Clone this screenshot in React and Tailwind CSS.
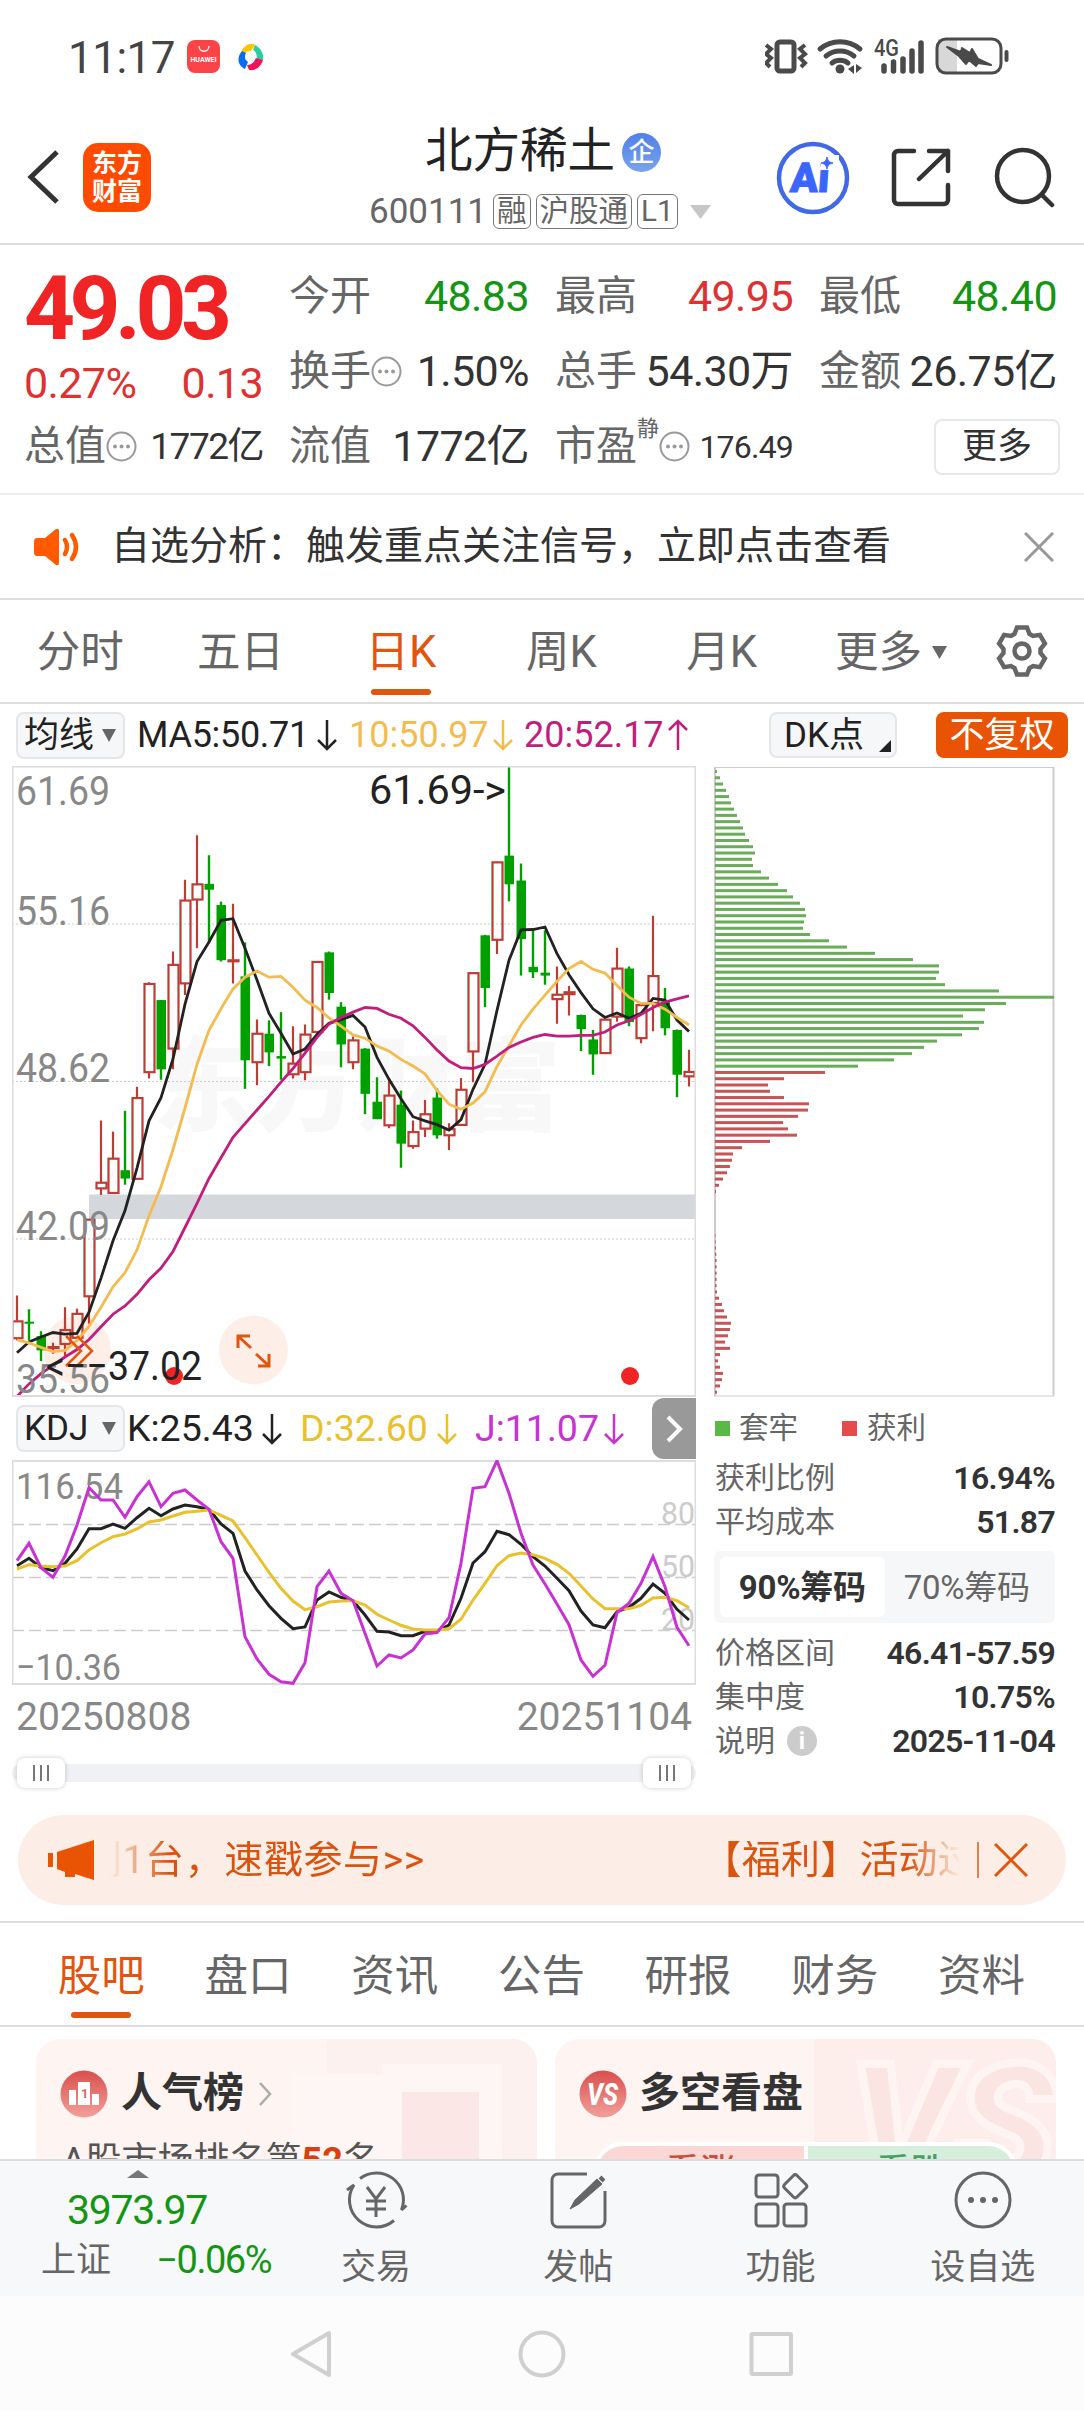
import React, { useState } from "react";

// [direction, high, body top, body bottom, low], counted down from the top of the pane
const candles = [
  ["r", 1292, 1353, 1396, 1400], ["g", 1325, 1355, 1359, 1400], ["g", 1378, 1390, 1424, 1450],
  ["r", 1406, 1415, 1420, 1432], ["r", 1320, 1374, 1410, 1440], ["r", 1324, 1335, 1395, 1400],
  ["r", 1108, 1108, 1295, 1360], ["r", 870, 1019, 1035, 1050], ["r", 897, 961, 1046, 1046],
  ["g", 847, 990, 1010, 1025], ["r", 789, 815, 1012, 1012], ["r", 537, 540, 755, 769],
  ["g", 580, 580, 747, 772], ["r", 463, 494, 698, 747], ["r", 290, 339, 541, 568],
  ["r", 183, 300, 339, 455], ["g", 231, 300, 314, 440], ["g", 343, 351, 484, 487],
  ["r", 348, 483, 484, 540], ["g", 441, 523, 725, 794], ["r", 627, 660, 731, 785],
  ["g", 629, 661, 706, 739], ["g", 609, 715, 721, 772], ["r", 643, 732, 760, 769],
  ["r", 639, 662, 755, 773], ["r", 487, 487, 658, 672], ["g", 463, 465, 563, 579],
  ["g", 585, 596, 687, 742], ["r", 668, 676, 731, 747], ["g", 696, 697, 806, 855],
  ["g", 766, 825, 867, 867], ["r", 770, 809, 883, 889], ["g", 798, 832, 926, 984],
  ["r", 870, 897, 933, 938], ["r", 821, 854, 891, 910], ["g", 793, 815, 906, 914],
  ["r", 877, 890, 907, 941], ["r", 768, 795, 882, 882], ["r", 513, 514, 705, 778],
  ["g", 423, 424, 551, 597], ["r", 246, 247, 436, 469], ["g", 16, 232, 301, 342],
  ["g", 251, 292, 433, 521], ["g", 410, 500, 513, 527], ["g", 412, 514, 521, 543],
  ["r", 499, 566, 579, 637], ["r", 546, 560, 567, 617], ["g", 615, 616, 650, 703],
  ["g", 652, 675, 711, 760], ["r", 625, 626, 709, 709], ["r", 454, 503, 621, 632],
  ["g", 499, 504, 633, 643], ["r", 590, 591, 673, 684], ["r", 377, 521, 588, 655],
  ["g", 551, 583, 648, 665], ["g", 651, 652, 760, 814], ["r", 700, 752, 765, 788],
];

const ma5 = [
  1430, 1404, 1392, 1381, 1385, 1383, 1332, 1250, 1160, 1087, 985, 871, 815, 722, 590, 487, 440, 388, 384,
  455, 532, 612, 660, 710, 698, 663, 636, 627, 617, 645, 718, 771, 818, 861, 871, 880, 893, 868, 795, 735,
  605, 484, 411, 410, 404, 468, 519, 562, 601, 622, 611, 624, 612, 576, 580, 628, 656,
];
const ma10 = [
  1399, 1406, 1417, 1427, 1424, 1400, 1366, 1320, 1271, 1237, 1182, 1100, 1030, 940, 840, 735, 653, 601, 553,
  525, 510, 525, 523, 549, 580, 598, 623, 643, 664, 672, 691, 703, 723, 739, 758, 798, 831, 843, 828, 801,
  740, 690, 640, 602, 568, 535, 504, 487, 506, 515, 545, 573, 588, 588, 602, 622, 640,
];
const ma20 = [
  1535, 1505, 1480, 1460, 1440, 1422, 1398, 1367, 1337, 1317, 1289, 1254, 1226, 1186, 1128, 1070, 1010, 960, 911,
  878, 845, 812, 778, 745, 708, 670, 638, 622, 609, 598, 600, 614, 624, 642, 670, 700, 727, 743, 745, 735,
  715, 694, 681, 670, 663, 667, 667, 665, 665, 657, 640, 630, 615, 598, 585, 577, 570,
];

const kLine = [
  527, 505, 533, 542, 520, 477, 416, 416, 402, 415, 383, 355, 377, 357, 345, 350, 358, 402, 430, 543, 600, 647,
  685, 716, 711, 630, 606, 622, 632, 675, 724, 726, 737, 737, 724, 724, 705, 625, 519, 485, 424, 434, 463, 500,
  528, 565, 602, 663, 705, 713, 665, 652, 625, 582, 610, 658, 690,
];
const dLine = [
  537, 524, 528, 530, 528, 512, 480, 458, 440, 432, 417, 396, 390, 378, 367, 364, 360, 376, 393, 443, 495, 547,
  595, 633, 659, 650, 636, 633, 632, 645, 673, 690, 706, 717, 720, 720, 716, 688, 630, 580, 527, 497, 489, 494,
  505, 523, 550, 588, 627, 656, 656, 656, 646, 624, 622, 632, 653,
];
const jLine = [
  512, 460, 533, 562, 498, 405, 293, 330, 330, 382, 320, 275, 350, 310, 300, 330, 358, 455, 505, 740, 807, 853,
  875, 880, 818, 590, 543, 610, 632, 730, 828, 795, 804, 780, 732, 728, 683, 520, 295, 290, 212, 310, 430, 525,
  582, 642, 704, 810, 859, 826, 668, 640, 580, 500, 590, 712, 767,
];

// chip distribution, one bar per price level, top to bottom
const chips = [
  2, 5, 8, 11, 14, 16, 19, 22, 25, 28, 30, 34, 38, 40, 37, 38, 46, 54, 63, 72, 78, 85, 90, 91, 89, 88, 95, 114,
  132, 160, 198, 224, 224, 221, 230, 284, 339, 291, 270, 248, 269, 264, 247, 222, 209, 197, 179, 143, 110, 69,
  53, 55, 69, 94, 93, 83, 68, 73, 82, 55, 27, 18, 17, 15, 12, 8, 4, 1, 0, 0, 0, 0, 0, 0, 0.5, 0.7, 1, 1.3, 1.6,
  1.6, 1.6, 1.6, 1.6, 2, 4, 7, 9, 12, 16, 15, 13, 10, 15, 5, 3, 5, 8, 7, 5, 2,
];

const candleX = (i) => 5 + i * 12;
const candleY = (v) => (v - 16) * 0.415;
const kdjY = (v) => v / 3 - 70;
const toPoints = (data, y) =>
  data.map((v, i) => `${candleX(i)},${y(v).toFixed(1)}`).join(" ");

const gearPoints = Array.from({ length: 6 })
  .flatMap((_, i) => {
    const a = (i * Math.PI) / 3;
    return [[-7.5, -17], [-5, -23.5], [5, -23.5], [7.5, -17]].map(
      ([x, y]) =>
        `${(27 + x * Math.cos(a) - y * Math.sin(a)).toFixed(1)},${(27 + x * Math.sin(a) + y * Math.cos(a)).toFixed(1)}`
    );
  })
  .join(" ");

const StatusBar = () => (
  <div className="flex h-[115px] items-start pl-[68px] pr-[74px] pt-[36px] text-[#444]">
    <span className="w-[119px] whitespace-nowrap text-[44px] leading-[44px] tracking-[-0.5px]">11:17</span>
    <div className="mt-[4px] flex h-[33px] w-[33px] flex-col items-center rounded-lg bg-[#fb4348] pt-[5px] text-white">
      <svg width="12" height="8" viewBox="0 0 12 8" fill="none" stroke="#fff" strokeWidth="1.3">
        <path d="M1 1c0 7 10 7 10 0" />
      </svg>
      <span className="mt-[3px] text-[7px] font-bold leading-[8px]">HUAWEI</span>
    </div>
    <svg className="ml-[18px] mt-[7px]" width="26" height="28" viewBox="0 0 26 28">
      <path d="M4 7C9 0 15 0 17 2l-4 6C10 8 6 10 4 11z" fill="#ffc400" />
      <path d="M17 2c7 4 9 10 8 15l-6-1c0-4-1-8-4-9z" fill="#28cda0" />
      <path d="M25 17c-2 7-8 11-14 10l-2-5c5 0 7-3 9-7z" fill="#f0145a" />
      <path d="M4 8c-6 7-4 15 3 18l3-7c-3-2-4-5-2-9z" fill="#0a6cf0" />
    </svg>
    <div className="flex-1" />
    <svg width="245" height="42" viewBox="0 0 245 42" fill="none" stroke="#4a4a4a">
      <rect x="12" y="6" width="17" height="29" rx="3" strokeWidth="5" />
      <path d="m1 9 5 4-5 5 5 4-5 5 4 4M40 9l-5 4 5 5-5 4 5 5-4 4" strokeWidth="4" />
      <path d="M55 13a31 31 0 0 1 40 0M61 20a22 22 0 0 1 28 0M67 27a13 13 0 0 1 16 0" strokeWidth="5" strokeLinecap="round" />
      <circle cx="75" cy="33" r="4.500" fill="#4a4a4a" stroke="none" />
      <path d="M83 33l6-4v9zM97 32l-6-4v9z" fill="#4a4a4a" stroke="none" />
      <text x="109" y="20" fontSize="23" fontWeight="500" textLength="25" lengthAdjust="spacingAndGlyphs" fill="#4a4a4a" stroke="none">4G</text>
      <path d="M119 35v-5M128.500 35v-9M138 35V23M147 35V15M156 35V7" strokeWidth="5.500" strokeLinecap="round" />
      <rect x="173" y="3" width="19" height="34" fill="#d8d8d8" stroke="none" />
      <rect x="172" y="3" width="64" height="34" rx="9" strokeWidth="3" />
      <path d="M182 11l14 5 1-4 8 5 2-4 6 10 13 6-13-2-2 3-7-6-3 4-7-8z" fill="#4a4a4a" strokeWidth="2" strokeLinejoin="round" />
      <path d="M241.500 16v8" strokeWidth="4" strokeLinecap="round" />
    </svg>
  </div>
);

const Tag = ({ children }) => (
  <span className="flex h-[35px] items-center whitespace-nowrap rounded-[6px] border-[1.500px] border-[#777] px-[3px] text-[29.500px] leading-none">
    {children}
  </span>
);

const Header = () => (
  <div className="flex h-[130px] items-start border-b-2 border-[#ddd] pl-[26px] pr-[28px]">
    <svg className="mt-[34px]" width="34" height="56" viewBox="0 0 34 56" fill="none" stroke="#333" strokeWidth="5">
      <path d="M31 3 5 28l26 25" />
    </svg>
    <div className="ml-[23px] mt-[28px] flex h-[69px] w-[68px] flex-col items-center justify-center rounded-[15px] bg-[#ff4b00] text-[25px] font-bold leading-[28px] text-white">
      <span>东方</span>
      <span>财富</span>
    </div>
    <div className="ml-[218px] flex w-[344px] flex-col">
      <div className="mt-[12px] flex h-[50px] items-center pl-[56px] text-[#222]">
        <span className="whitespace-nowrap text-[47.500px] leading-none">北方稀土</span>
        <span className="ml-[7px] flex h-[39px] w-[39px] items-center justify-center rounded-full bg-gradient-to-b from-[#4f7fe8] to-[#7aa4ea] text-[26px] font-medium leading-none text-white">
          企
        </span>
      </div>
      <div className="mt-[16px] flex h-[37px] items-center gap-[5px] text-[#666]">
        <span className="w-[119px] text-[35px] leading-none">600111</span>
        <Tag>融</Tag>
        <Tag>沪股通</Tag>
        <Tag>L1</Tag>
        <svg className="ml-[7px]" width="21" height="14" viewBox="0 0 21 14" fill="#c6c6c6">
          <path d="M0 0h21L10.500 14z" />
        </svg>
      </div>
    </div>
    <svg className="ml-[63px] mt-[26px]" width="74" height="74" viewBox="0 0 74 74">
      <circle cx="37" cy="37" r="34" fill="none" stroke="#4169e6" strokeWidth="4.500" />
      <text x="15" y="51" fontSize="41" fontWeight="900" fill="#3a66ff" transform="skewX(-4) translate(2 0)" stroke="#3a66ff" strokeWidth="1">Ai</text>
      <path d="M45 14h18v15H45z" fill="#fff" />
      <path d="M51 16c1 4 2 5 6 6-4 1-5 2-6 6-1-4-2-5-6-6 4-1 5-2 6-6z" fill="#3a66ff" stroke="#3a66ff" strokeWidth="1" />
    </svg>
    <svg className="ml-[41px] mt-[33px]" width="62" height="60" viewBox="0 0 62 60" fill="none" stroke="#333" strokeWidth="4.500" strokeLinecap="round" strokeLinejoin="round">
      <path d="M23 3H7a4 4 0 0 0-4 4v45a4 4 0 0 0 4 4h46a4 4 0 0 0 4-4V37M38 3h19v20M57 3 28 31" />
    </svg>
    <svg className="ml-[40px] mt-[31px]" width="62" height="64" viewBox="0 0 62 64" fill="none" stroke="#333" strokeWidth="4.500" strokeLinecap="round">
      <circle cx="30" cy="30" r="26" />
      <path d="m50 50 9 9" />
    </svg>
  </div>
);

const More = () => (
  <svg className="shrink-0" width="31" height="31" viewBox="0 0 31 31" fill="#999">
    <circle cx="15.500" cy="15.500" r="14" fill="none" stroke="#999" strokeWidth="2" />
    <circle cx="9" cy="15.500" r="2" />
    <circle cx="15.500" cy="15.500" r="2" />
    <circle cx="22" cy="15.500" r="2" />
  </svg>
);

const Stat = ({ label, value, color = "text-[#333]", info }) => (
  <div className="flex h-[75px] items-center leading-none">
    <span className="whitespace-nowrap text-[41px] text-[#666]">{label}</span>
    {info && <More />}
    <span className={`ml-auto whitespace-nowrap text-[43px] tracking-[-0.6px] ${color}`}>{value}</span>
  </div>
);

const Quote = () => (
  <div className="grid h-[250px] grid-cols-[239px_240px_238px_238px] gap-x-[26px] border-b-2 border-[#eee] pl-[24px] pt-[14px]">
    <div className="leading-none">
      <div className="flex h-[98px] items-center">
        <span className="text-[89px] font-bold tracking-[-5.500px] text-[#f02424]">49.03</span>
      </div>
      <div className="flex h-[52px] items-center justify-between text-[43px] tracking-[-0.6px] text-[#dc3232]">
        <span>0.27%</span>
        <span>0.13</span>
      </div>
      <div className="flex h-[75px] items-center">
        <span className="text-[41px] text-[#666]">总值</span>
        <More />
        <span className="ml-auto whitespace-nowrap text-[37px] tracking-[-1.500px] text-[#333]">1772亿</span>
      </div>
    </div>
    <div>
      <Stat label="今开" value="48.83" color="text-[#149614]" />
      <Stat label="换手" value="1.50%" info />
      <Stat label="流值" value="1772亿" />
    </div>
    <div>
      <Stat label="最高" value="49.95" color="text-[#dc3232]" />
      <Stat label="总手" value="54.30万" />
      <div className="flex h-[75px] items-center leading-none">
        <span className="text-[41px] text-[#666]">市盈</span>
        <span className="mb-[36px] text-[22px] text-[#666]">静</span>
        <More />
        <span className="ml-auto text-[32px] tracking-[-0.8px] text-[#333]">176.49</span>
      </div>
    </div>
    <div>
      <Stat label="最低" value="48.40" color="text-[#149614]" />
      <Stat label="金额" value="26.75亿" />
      <div className="flex h-[75px] items-center justify-end">
        <button className="mr-[-3px] h-[56px] w-[126px] rounded-[8px] border-2 border-[#e6e8ea] text-[35px] leading-none text-[#333]">
          更多
        </button>
      </div>
    </div>
  </div>
);

const Notice = () => (
  <div className="flex h-[105px] items-center border-b-2 border-[#ddd] pl-[34px] pr-[30px]">
    <svg width="46" height="38" viewBox="0 0 46 38" fill="#ff5a00">
      <path d="M3 10h8L22 1q3-1 3 2v32q0 3-3 2l-11-9H3q-3 0-3-4V14q0-4 3-4z" />
      <path d="M31 12q4 7 0 14M38 7q8 12 0 24" fill="none" stroke="#ff5a00" strokeWidth="4.500" strokeLinecap="round" />
    </svg>
    <span className="ml-[31px] whitespace-nowrap text-[39px] leading-none text-[#333]">
      自选分析：触发重点关注信号，立即点击查看
    </span>
    <svg className="ml-auto" width="30" height="30" viewBox="0 0 30 30" stroke="#999" strokeWidth="3">
      <path d="M1 1l28 28M29 1 1 29" />
    </svg>
  </div>
);

const periods = ["分时", "五日", "日K", "周K", "月K"];

const PeriodTabs = () => {
  const [active, setActive] = useState("日K");
  return (
    <div className="flex h-[104px] items-start border-b-2 border-[#ddd] text-[43.500px] leading-none text-[#666]">
      {periods.map((p) => (
        <button
          key={p}
          className={`flex h-full w-[160.400px] flex-col items-center pt-[31px] ${
            active === p ? "text-[#e0560f]" : ""
          }`}
          onClick={() => setActive(p)}
        >
          <span className="h-[58px]">{p}</span>
          {active === p && <span className="h-[6px] w-[60px] rounded-full bg-[#e0560f]" />}
        </button>
      ))}
      <div className="ml-[33px] flex items-center pt-[31px]">
        <span>更多</span>
        <svg className="ml-[10px]" width="15" height="13" viewBox="0 0 15 13" fill="#666">
          <path d="M0 0h15L7.500 13z" />
        </svg>
      </div>
      <svg className="ml-auto mr-[35px] mt-[24px]" width="54" height="54" viewBox="0 0 54 54" fill="none" stroke="#666" strokeWidth="4.500">
        <polygon points={gearPoints} />
        <circle cx="27" cy="27" r="7.500" />
      </svg>
    </div>
  );
};

const Arrow = ({ up }) => (
  <svg className="shrink-0" width="20" height="32" viewBox="0 0 20 32" fill="none" stroke="currentColor" strokeWidth="2.500">
    {up ? <path d="M10 31V2M1 11l9-9 9 9" /> : <path d="M10 1v29M1 21l9 9 9-9" />}
  </svg>
);

const Indicator = ({ text, up, className }) => (
  <span className={`flex items-center justify-between whitespace-nowrap leading-none ${className}`}>
    {text}
    <Arrow up={up} />
  </span>
);

const Dropdown = ({ children }) => (
  <button className="flex h-[47px] w-[109px] items-center justify-between rounded-[8px] border-2 border-[#e4e6e9] bg-[#f6f7f9] pl-[6px] pr-[7px] text-[35px] leading-none text-[#222]">
    {children}
    <svg width="14" height="13" viewBox="0 0 14 13" fill="#666">
      <path d="M0 0h14L7 13z" />
    </svg>
  </button>
);

const AxisLabel = ({ x = 4, y, w = 94, size = 40, fill = "#888", children }) => (
  <text x={x} y={y} fontSize={size} textLength={w} lengthAdjust="spacingAndGlyphs" fill={fill}>
    {children}
  </text>
);

const CandleChart = () => (
  <svg className="block" width="684" height="631" viewBox="0 0 684 631" fill="none">
    <text x="141" y="357" fontSize="102" fontWeight="900" fill="#f8f8f8">东方财富</text>
    {[158, 315.500, 473].map((y) => (
      <path key={y} d={`M0 ${y}H684`} stroke="#ccc" strokeDasharray="2 2" />
    ))}
    <rect x="77" y="428.500" width="607" height="24.500" fill="#d4d7dc" />
    <circle cx="65" cy="584" r="34" fill="#fdefe8" />
    <circle cx="241.500" cy="584" r="34.500" fill="#fdefe8" />
    {candles.map(([dir, high, top, bottom, low], i) => {
      const x = candleX(i);
      const y1 = candleY(top);
      const h = Math.max(candleY(bottom) - y1, 2);
      if (dir === "g") {
        return (
          <g key={i} fill="#00a000">
            <rect x={x - 1.2} y={candleY(high)} width="2.400" height={candleY(low) - candleY(high)} />
            <rect x={x - 4.500} y={y1} width="9.500" height={h} />
          </g>
        );
      }
      return (
        <g key={i} stroke="#be3c36" strokeWidth="2.200">
          <path d={`M${x} ${candleY(high)}V${y1}M${x} ${y1 + h}V${candleY(low)}`} />
          <rect x={x - 4.500} y={y1 + 0.500} width="10" height={Math.max(h - 1, 1)} />
        </g>
      );
    })}
    <polyline points={toPoints(ma5, candleY)} stroke="#222" strokeWidth="2.800" />
    <polyline points={toPoints(ma10, candleY)} stroke="#f2bc50" strokeWidth="2.800" />
    <polyline points={toPoints(ma20, candleY)} stroke="#c01e7d" strokeWidth="2.800" />
    <path d="M54 570l15 15-15 15M65 570l15 15-15 15" stroke="#e0560f" strokeWidth="2.500" />
    <path d="M226 582v-12h12M227 571l12 11M246 600h11v-12M256 599l-12-11" stroke="#e0560f" strokeWidth="3" />
    <circle cx="162" cy="610" r="9" fill="#f02424" />
    <circle cx="618" cy="610" r="9" fill="#f02424" />
    <AxisLabel y={39}>61.69</AxisLabel>
    <AxisLabel y={159}>55.16</AxisLabel>
    <AxisLabel y={316}>48.62</AxisLabel>
    <AxisLabel y={474}>42.09</AxisLabel>
    <AxisLabel y={627}>35.56</AxisLabel>
    <AxisLabel x={357} y={38} w={137} fill="#222">61.69-&gt;</AxisLabel>
    <AxisLabel x={34} y={614} w={156} fill="#222">&lt;−−37.02</AxisLabel>
    <path d="M0 .5H684M0 630H684M.5 0V631M683.500 0V631" stroke="#ddd" strokeWidth="2" />
  </svg>
);

const KdjChart = () => (
  <svg className="block" width="684" height="225" viewBox="0 0 684 225" fill="none">
    {[64, 117, 170].map((y) => (
      <path key={y} d={`M0 ${y}.5H684`} stroke="#ccc" strokeWidth="1.500" strokeDasharray="12 5" />
    ))}
    <AxisLabel x={649} y={64} w={34} size={32} fill="#ccc">80</AxisLabel>
    <AxisLabel x={649} y={117} w={34} size={32} fill="#ccc">50</AxisLabel>
    <AxisLabel x={649} y={170} w={34} size={32} fill="#ccc">20</AxisLabel>
    <AxisLabel y={39} w={107} size={37}>116.54</AxisLabel>
    <AxisLabel y={220} w={105} size={37}>−10.36</AxisLabel>
    <path d="M0 1H684M0 224H684M.5 0V225M683.500 0V225" stroke="#ddd" strokeWidth="2" />
    <polyline points={toPoints(kLine, kdjY)} stroke="#222" strokeWidth="3" />
    <polyline points={toPoints(dLine, kdjY)} stroke="#e8c12c" strokeWidth="3" />
    <polyline points={toPoints(jLine, kdjY)} stroke="#c832d2" strokeWidth="3" />
  </svg>
);

const Handle = () => (
  <div className="flex h-[30px] w-[48px] items-center justify-center gap-[5px] rounded-[8px] bg-white shadow-[0_0_5px_rgba(0,0,0,0.2)]">
    <span className="h-[16px] w-[2px] bg-[#777]" />
    <span className="h-[16px] w-[2px] bg-[#777]" />
    <span className="h-[16px] w-[2px] bg-[#777]" />
  </div>
);

const ChartColumn = () => (
  <div className="w-[684px] shrink-0">
    <div className="flex h-[62px] items-center pl-[4px] text-[36px]">
      <Dropdown>均线</Dropdown>
      <Indicator text="MA5:50.71" className="ml-[12px] w-[200px] tracking-[-0.3px] text-[#222]" />
      <Indicator text="10:50.97" className="ml-[12px] w-[164px] text-[#f2bc50]" />
      <Indicator text="20:52.17" up className="ml-[11px] w-[164px] text-[#c01e7d]" />
    </div>
    <CandleChart />
    <div className="flex h-[63px] items-center pl-[4px] text-[37.500px]">
      <Dropdown>KDJ</Dropdown>
      <Indicator text="K:25.43" className="ml-[2px] w-[155px] text-[#222]" />
      <Indicator text="D:32.60" className="ml-[18px] w-[157px] text-[#e8c12c]" />
      <Indicator text="J:11.07" className="ml-[18px] w-[149px] text-[#c832d2]" />
      <button className="ml-auto flex h-[61px] w-[44px] items-center justify-center rounded-l-[12px] bg-[#999]">
        <svg width="18" height="28" viewBox="0 0 18 28" fill="none" stroke="#fff" strokeWidth="4">
          <path d="m3 2 12 12L3 26" />
        </svg>
      </button>
    </div>
    <KdjChart />
    <div className="flex h-[64px] items-center justify-between px-[4px] text-[39px] leading-none text-[#888]">
      <span>20250808</span>
      <span>20251104</span>
    </div>
    <div className="mt-[15px] flex h-[18px] items-center justify-between rounded-full bg-[#f0f1f4] px-[5px]">
      <Handle />
      <Handle />
    </div>
  </div>
);

const Row = ({ label, value, info }) => (
  <div className="flex h-[44px] items-center leading-none">
    <span className="ml-[1px] text-[30px] text-[#666]">{label}</span>
    {info && (
      <span className="ml-[12px] flex h-[30px] w-[30px] items-center justify-center rounded-full bg-[#ccc] text-[24px] font-bold text-white">
        i
      </span>
    )}
    <span className="ml-auto text-[32px] font-semibold tracking-[-0.7px] text-[#333]">{value}</span>
  </div>
);

const ChipColumn = () => {
  const [range, setRange] = useState("90%筹码");
  return (
    <div className="ml-[18px] w-[341px] shrink-0">
      <div className="flex h-[62px] items-center">
        <button className="relative ml-[55px] h-[46px] w-[128px] shrink-0 rounded-[8px] border-2 border-[#e4e6e9] bg-[#f6f7f9] pl-[13px] text-left text-[35px] leading-none text-[#222]">
          DK点
          <svg className="absolute bottom-[4px] right-[4px]" width="12" height="12" viewBox="0 0 12 12" fill="#222">
            <path d="M12 0v12H0z" />
          </svg>
        </button>
        <button className="ml-[39px] h-[46px] w-[132px] shrink-0 rounded-[8px] bg-[#e85404] text-[35px] leading-none text-white">
          不复权
        </button>
      </div>
      <svg className="block" width="341" height="631" viewBox="0 0 341 631">
        <path d="M0 1.500H340M0 630H340" stroke="#ccc" />
        <path d="M1 1V630M339.500 1V630" stroke="#ccc" strokeWidth="2" />
        {chips.map((w, i) => (
          <rect key={i} x="1" y={4 + i * 6.270} width={w} height="3" fill={i < 48 ? "#69ad58" : "#c85555"} />
        ))}
      </svg>
      <div className="flex h-[63px] items-center text-[29.500px] leading-none text-[#666]">
        <span className="ml-[1px] h-[15px] w-[15px] bg-[#5ab946]" />
        <span className="ml-[9px] w-[60px]">套牢</span>
        <span className="ml-[43px] h-[15px] w-[15px] bg-[#e64b4b]" />
        <span className="ml-[10px]">获利</span>
      </div>
      <div className="-mt-[4px]">
        <Row label="获利比例" value="16.94%" />
        <Row label="平均成本" value="51.87" />
      </div>
      <div className="mb-[8px] mt-[7px] flex h-[72px] rounded-[6px] bg-[#f6f7f9] p-[6px]">
        {["90%筹码", "70%筹码"].map((r) => (
          <button
            key={r}
            className={`flex-1 whitespace-nowrap rounded-[6px] text-[33px] leading-none tracking-[-0.3px] ${
              range === r ? "bg-white font-bold text-[#333]" : "text-[#666]"
            }`}
            onClick={() => setRange(r)}
          >
            {r}
          </button>
        ))}
      </div>
      <Row label="价格区间" value="46.41-57.59" />
      <Row label="集中度" value="10.75%" />
      <Row label="说明" value="2025-11-04" info />
    </div>
  );
};

const Banner = () => (
  <div className="mx-[18px] flex h-[90px] items-center rounded-full bg-[#fceee6] pl-[30px] pr-[38px] text-[39px] leading-none text-[#d9540f]">
    <svg width="46" height="40" viewBox="0 0 46 40" fill="#e85404">
      <path d="M0 13h5v14H0zM9 12 46 0v40L27 34v3H17v-5l-8-3z" />
    </svg>
    <div className="ml-[16px] flex w-[850px] justify-between overflow-hidden whitespace-nowrap [mask-image:linear-gradient(to_right,transparent,#000_7%,#000_94%,transparent)]">
      <span className="-ml-[27px] tracking-[0.600px]">利1台，速戳参与&gt;&gt;</span>
      <span className="-mr-[17px] tracking-[0.200px]">【福利】活动过</span>
    </div>
    <span className="ml-[17px] h-[36px] w-[2px] bg-[#e0824f]" />
    <svg className="ml-auto" width="34" height="34" viewBox="0 0 34 34" stroke="#e0560f" strokeWidth="3">
      <path d="M1 1l32 32M33 1 1 33" />
    </svg>
  </div>
);

const sections = ["股吧", "盘口", "资讯", "公告", "研报", "财务", "资料"];

const SectionTabs = () => {
  const [active, setActive] = useState("股吧");
  return (
    <div className="mt-[16px] flex h-[106px] border-y-2 border-[#ddd] pl-[28px] text-[43.500px] leading-none text-[#666]">
      {sections.map((s) => (
        <button
          key={s}
          className={`flex w-[146.700px] flex-col items-center pt-[32px] ${
            active === s ? "text-[#e0560f]" : ""
          }`}
          onClick={() => setActive(s)}
        >
          <span className="h-[57px]">{s}</span>
          {active === s && <span className="h-[6px] w-[60px] rounded-full bg-[#e0560f]" />}
        </button>
      ))}
    </div>
  );
};

const Cards = () => (
  <div className="flex h-[132px] gap-[18px] overflow-hidden px-[36px] pt-[12px]">
    <div className="relative h-[200px] w-[501px] shrink-0 overflow-hidden rounded-[24px] bg-[#fef4f2]">
      <svg className="absolute right-0 top-0" width="260" height="120" viewBox="0 0 260 120">
        <path d="M50 0h210v120H50z" fill="#fdf1ef" />
        <path d="M105 25h120v95H105zM15 35h90v85H15z" fill="#fef6f4" />
        <path d="M125 53h77v67h-77z" fill="#fbe8e6" />
      </svg>
      <div className="relative flex h-[96px] items-center pl-[24px] pt-[13px]">
        <svg width="48" height="48" viewBox="0 0 48 48">
          <defs>
            <linearGradient id="badge" x1="0" y1="0" x2="0" y2="1">
              <stop offset="0" stopColor="#d94f4c" />
              <stop offset="1" stopColor="#f2a09b" />
            </linearGradient>
          </defs>
          <circle cx="24" cy="24" r="23.500" fill="url(#badge)" />
          <path d="M9 20h7v15H9zM18 12h12v23H18zM32 24h7v11h-7z" fill="#fff" />
          <text x="21" y="28" fontSize="13" fontWeight="700" fill="#dd6561">1</text>
        </svg>
        <span className="ml-[13px] text-[41px] font-bold leading-none text-[#333]">人气榜</span>
        <svg className="ml-[14px]" width="15" height="24" viewBox="0 0 15 24" fill="none" stroke="#aaa" strokeWidth="2.500">
          <path d="m2 1 10 11L2 23" />
        </svg>
      </div>
      <div className="relative pl-[26px] pt-[8px] text-[36px] leading-none text-[#555]">
        A股市场排名第<b className="text-[#d9400f]">52</b>名
      </div>
    </div>
    <div className="relative h-[200px] w-[501px] shrink-0 overflow-hidden rounded-[24px] bg-[#fef4f2]">
      <svg className="absolute right-0 top-0" width="250" height="120" viewBox="0 0 250 120">
        <path d="M8 0h242v120H8z" fill="#fdeeec" />
        <text x="44" y="142" fontSize="165" fontWeight="900" fontStyle="italic" fill="#fbe5e3" stroke="#fef5f3" strokeWidth="8">VS</text>
      </svg>
      <div className="relative flex h-[96px] items-center pl-[24px] pt-[13px]">
        <svg width="48" height="48" viewBox="0 0 48 48">
          <circle cx="24" cy="24" r="23.500" fill="url(#badge)" />
          <text x="8" y="35" fontSize="31" fontWeight="800" fontStyle="italic" textLength="31" lengthAdjust="spacingAndGlyphs" fill="#fff">VS</text>
        </svg>
        <span className="ml-[12px] text-[41px] font-bold leading-none text-[#333]">多空看盘</span>
      </div>
      <div className="relative mx-[38px] mt-[7px] flex h-[60px] gap-[4px] rounded-full border-4 border-white bg-white text-[35px] font-medium leading-none">
        <div className="flex-1 rounded-l-full bg-[#fbd8d6] pt-[9px] text-center text-[#c8503c]">看涨</div>
        <div className="flex-1 rounded-r-full bg-[#d5efdc] pt-[9px] text-center text-[#46a064]">看跌</div>
      </div>
    </div>
  </div>
);

const icons = {
  trade: (
    <>
      <path d="M16 8.500A27 27 0 0 1 57.500 40l5-4.500M50 50.500A27 27 0 0 1 10 15l-7 5" />
      <path d="m23 17 9 12 9-12M32 29v18M22 31h20M22 39h20" />
    </>
  ),
  post: (
    <>
      <path d="M41 4H12a6 6 0 0 0-6 6v41a6 6 0 0 0 6 6h41a6 6 0 0 0 6-6V21" />
      <path d="M51 9 29 30l-5 9 9-5 23-20z" fill="#666" strokeWidth="1" />
      <path d="m54 7 4 4" strokeWidth="4" />
    </>
  ),
  tools: (
    <>
      <rect x="7" y="5" width="22" height="22" rx="3" />
      <rect x="7" y="34" width="22" height="22" rx="3" />
      <rect x="35" y="34" width="22" height="22" rx="3" />
      <path d="M44.500 5.500a2.500 2.500 0 0 1 3.500 0l9 9a2.500 2.500 0 0 1 0 3.500l-9 9a2.500 2.500 0 0 1-3.500 0l-9-9a2.500 2.500 0 0 1 0-3.500z" />
    </>
  ),
  watch: (
    <>
      <circle cx="32" cy="30" r="27" />
      <circle cx="20" cy="30" r="1.500" />
      <circle cx="32" cy="30" r="1.500" />
      <circle cx="44" cy="30" r="1.500" />
    </>
  ),
};

const actions = [
  ["trade", "交易"],
  ["post", "发帖"],
  ["tools", "功能"],
  ["watch", "设自选"],
];

const BottomBar = () => (
  <div className="flex h-[137px] border-t-2 border-[#ddd] bg-[#f6f8fa]">
    <div className="w-[275px] pl-[41px] leading-none">
      <svg className="ml-[86px] mt-[9px]" width="22" height="8" viewBox="0 0 22 8" fill="#777">
        <path d="M11 0 22 8H0z" />
      </svg>
      <div className="mt-[12px] pl-[26px] text-[41px] tracking-[-1.300px] text-[#149614]">3973.97</div>
      <div className="mt-[10px] flex w-[230px] items-center justify-between text-[35px]">
        <span className="text-[#666]">上证</span>
        <span className="text-[38px] tracking-[-1.500px] text-[#149614]">−0.06%</span>
      </div>
    </div>
    {actions.map(([icon, label]) => (
      <button key={icon} className="flex w-[202.400px] flex-col items-center pt-[9px] leading-none text-[#666]">
        <svg className="overflow-visible" width="64" height="60" viewBox="0 0 64 60" fill="none" stroke="#666" strokeWidth="3">
          {icons[icon]}
        </svg>
        <span className="mt-[20px] text-[35px]">{label}</span>
      </button>
    ))}
  </div>
);

const NavBar = () => (
  <div className="flex h-[115px] items-center bg-[#fcfcfc] pl-[288px]">
    <svg width="508" height="50" viewBox="0 0 508 50" fill="none" stroke="#d0d0d0" strokeWidth="4" strokeLinejoin="round">
      <path d="M41 4v42L5 25z" />
      <circle cx="254" cy="25" r="21.500" />
      <rect x="463.500" y="5" width="39.500" height="40" rx="1" />
    </svg>
  </div>
);

const App = () => {
  return (
    <div className="h-[2412px] w-[1084px] overflow-hidden bg-white font-[Roboto,'Noto_Sans_CJK_SC',sans-serif]">
      <StatusBar />
      <Header />
      <Quote />
      <Notice />
      <PeriodTabs />
      <div className="flex h-[1111px] pl-[12px]">
        <ChartColumn />
        <ChipColumn />
      </div>
      <Banner />
      <SectionTabs />
      <Cards />
      <BottomBar />
      <NavBar />
    </div>
  );
};

export default App;
